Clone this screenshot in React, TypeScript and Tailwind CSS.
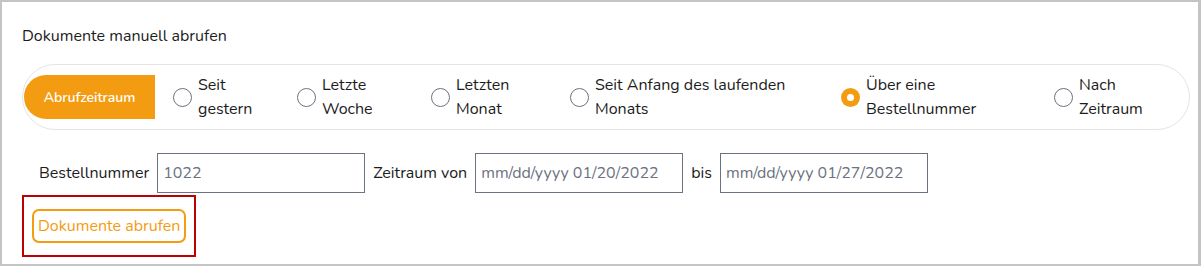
const font = "font-['Nunito','Open_Sans',sans-serif]";

type Option = { label: string; item: string; text: string; checked?: boolean };

const options: Option[] = [
  { label: "Seit gestern", item: "w-[124px]", text: "w-[62px]" },
  { label: "Letzte Woche", item: "w-[134px]", text: "w-[62px]" },
  { label: "Letzten Monat", item: "w-[139px]", text: "w-[72px]" },
  { label: "Seit Anfang des laufenden Monats", item: "w-[271px]", text: "w-[215px]" },
  { label: "Über eine Bestellnummer", item: "w-[213px]", text: "w-[125px]", checked: true },
  { label: "Nach Zeitraum", item: "w-[100px]", text: "w-[72px]" },
];

const Radio = ({ checked }: { checked?: boolean }) =>
  checked ? (
    <span className="flex h-[19px] w-[19px] shrink-0 items-center justify-center rounded-full bg-[#f39c12]">
      <span className="h-[7px] w-[7px] rounded-full bg-white" />
    </span>
  ) : (
    <span className="h-[19px] w-[19px] shrink-0 rounded-full border-[1.5px] border-[#6b7280] bg-white" />
  );

export default function App() {
  return (
    <div className={`${font} h-[266px] w-[1201px] border-2 border-r-[3px] border-[#c4c4c4] bg-white text-[#1c1c1c]`}>
      <div className="px-5 pt-[24px]">
        <h3 className="text-[16px] leading-5">Dokumente manuell abrufen</h3>

        {/* Abrufzeitraum */}
        <div className="mt-[18px] flex h-[66px] w-[1168px] items-center rounded-full border border-[#e4e4e4] pl-[1px]">
          <div className="flex h-[44px] w-[131px] items-center justify-center rounded-l-full bg-[#f39c12] text-[14px] font-semibold text-white">
            Abrufzeitraum
          </div>
          <div className="ml-[18px] flex items-center">
            {options.map((o) => (
              <label key={o.label} className={`${o.item} flex items-center gap-[6px]`}>
                <Radio checked={o.checked} />
                <span className={`${o.text} text-[16px] leading-6`}>{o.label}</span>
              </label>
            ))}
          </div>
        </div>

        {/* Felder */}
        <div className="mt-[23px] flex items-center gap-2 pl-[17px] text-[16px]">
          <span>Bestellnummer</span>
          <input
            defaultValue="1022"
            className="h-10 w-[208px] border border-[#6b7280] px-[5px] text-[16px] text-[#6b7280] outline-none"
          />
          <span>Zeitraum von</span>
          <input
            defaultValue="mm/dd/yyyy 01/20/2022"
            className="h-10 w-[208px] border border-[#6b7280] px-[5px] text-[16px] text-[#6b7280] outline-none"
          />
          <span>bis</span>
          <input
            defaultValue="mm/dd/yyyy 01/27/2022"
            className="h-10 w-[208px] border border-[#6b7280] px-[5px] text-[16px] text-[#6b7280] outline-none"
          />
        </div>

        <div className="mt-[2px] inline-block border-2 border-[#c00000] px-2 py-3">
          <button className="rounded-[7px] border-2 border-[#f39c12] px-[4px] py-[5px] text-[16px] leading-5 text-[#f39c12]">
            Dokumente abrufen
          </button>
        </div>
      </div>
    </div>
  );
}
